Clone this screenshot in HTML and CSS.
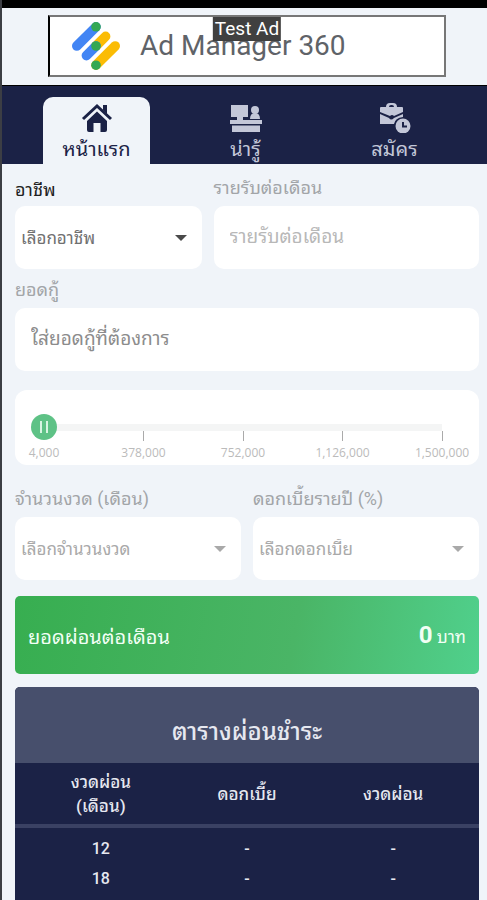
FILE: index.html
```html
<!DOCTYPE html>
<html lang="th">
<head>
<meta charset="utf-8">
<meta name="viewport" content="width=device-width, initial-scale=1">
<title>หน้าแรก</title>
<link rel="stylesheet" href="styles.css">
</head>
<body>
<div class="status-bar"></div>
<aside class="ad">
  <a class="ad-banner" href="#">
    <svg class="ad-logo" viewBox="0 0 50 50" aria-hidden="true">
      <g fill="none" stroke-width="10" stroke-linecap="round">
        <path stroke="#4285f4" d="M5 25 25 5"/>
        <path stroke="#fbbc04" d="M25 25 35 15"/>
        <path stroke="#4285f4" d="M15 35 25 25"/>
        <path stroke="#fbbc04" d="M25 45 45 25"/>
      </g>
      <g fill="#34a853"><circle cx="25" cy="5" r="5"/><circle cx="25" cy="25" r="5"/><circle cx="25" cy="45" r="5"/></g>
    </svg>
    <span class="ad-name">Ad Manager 360</span>
    <span class="ad-badge">Test Ad</span>
  </a>
</aside>
<nav class="tabs">
  <a class="tab tab-active" href="#">
    <svg class="tab-icon" viewBox="0 0 32 30" aria-hidden="true">
      <path fill="none" stroke="currentColor" stroke-width="3" d="M2 16 16 3 30 16"/>
      <path fill="currentColor" d="M22 2h4v9l-4-4zM16 8.500 26 18v9q0 2-2 2h-4.500v-9h-7v9H8q-2 0-2-2v-9z"/>
    </svg>
    <span>หน้าแรก</span>
  </a>
  <a class="tab" href="#">
    <svg class="tab-icon" viewBox="0 0 32 30" aria-hidden="true">
      <path fill="currentColor" d="M1 2h17v12h-5v3h19v4H0v-4h7v-3H1zM2 22.500h28V29H2z"/>
      <circle fill="currentColor" cx="25" cy="7" r="4"/>
      <path fill="currentColor" d="M20 16q0-6 5-6t5 6z"/>
    </svg>
    <span>น่ารู้</span>
  </a>
  <a class="tab" href="#">
    <svg class="tab-icon" viewBox="0 0 32 30" aria-hidden="true">
      <path fill="currentColor" fill-rule="evenodd" d="M7 4q0-4 4-4h3q4 0 4 4h5q1 0 1 1v4l-9 4q-2-2-4 0L1 9V5q0-1 1-1zM10 4h5q0-2-2-2h-1q-2 0-2 2z"/>
      <path fill="currentColor" d="M1 11l9 4q2 3 5 0l9-4v3q-8 1-9 7H1z"/>
      <circle fill="currentColor" cx="24" cy="23" r="7.500"/>
      <path fill="none" stroke="#1b2246" stroke-width="2" d="M24 19v4.500h4"/>
    </svg>
    <span>สมัคร</span>
  </a>
</nav>
<main class="page">
  <form class="form">
    <div class="row row-job">
      <div class="field">
        <label class="label label-job" for="job">อาชีพ</label>
        <div class="select select-dark">
          <select id="job"><option>เลือกอาชีพ</option></select>
          <svg class="caret" viewBox="0 0 12 6" aria-hidden="true"><path fill="currentColor" d="M0 0h12L6 6z"/></svg>
        </div>
      </div>
      <div class="field">
        <label class="label" for="income">รายรับต่อเดือน</label>
        <input class="input input-light" id="income" type="text" placeholder="รายรับต่อเดือน">
      </div>
    </div>
    <div class="field">
      <label class="label" for="loan">ยอดกู้</label>
      <input class="input" id="loan" type="text" placeholder="ใส่ยอดกู้ที่ต้องการ">
    </div>
    <div class="slider">
      <input class="range" type="range" min="4000" max="1500000" step="1000" value="4000" aria-label="ยอดกู้">
      <ul class="ticks">
        <li>4,000</li><li>378,000</li><li>752,000</li><li>1,126,000</li><li>1,500,000</li>
      </ul>
    </div>
    <div class="row">
      <div class="field">
        <label class="label" for="term">จำนวนงวด (เดือน)</label>
        <div class="select">
          <select id="term"><option>เลือกจำนวนงวด</option></select>
          <svg class="caret" viewBox="0 0 12 6" aria-hidden="true"><path fill="currentColor" d="M0 0h12L6 6z"/></svg>
        </div>
      </div>
      <div class="field">
        <label class="label" for="rate">ดอกเบี้ยรายปี (%)</label>
        <div class="select">
          <select id="rate"><option>เลือกดอกเบี้ย</option></select>
          <svg class="caret" viewBox="0 0 12 6" aria-hidden="true"><path fill="currentColor" d="M0 0h12L6 6z"/></svg>
        </div>
      </div>
    </div>
  </form>
  <section class="total">
    <span class="total-label">ยอดผ่อนต่อเดือน</span>
    <span class="total-value"><strong>0</strong> บาท</span>
  </section>
  <section class="schedule">
    <h2 class="schedule-title">ตารางผ่อนชำระ</h2>
    <table class="schedule-table">
      <colgroup><col class="col-wide"><col><col class="col-wide"></colgroup>
      <thead><tr><th>งวดผ่อน<br>(เดือน)</th><th>ดอกเบี้ย</th><th>งวดผ่อน</th></tr></thead>
      <tbody>
        <tr><td>12</td><td>-</td><td>-</td></tr>
        <tr><td>18</td><td>-</td><td>-</td></tr>
      </tbody>
    </table>
  </section>
</main>
</body>
</html>
```
FILE: styles.css
```css
* { box-sizing: border-box; }
body {
  margin: 0;
  min-height: 100vh;
  display: flex;
  flex-direction: column;
  background: #f0f4f9;
  border-left: 2px solid #3c3e44;
  font-family: Roboto, "Noto Sans Thai Looped", "Noto Looped Thai", "Droid Sans Thai", Loma, Garuda, "Noto Sans Thai", sans-serif;
  color: #a2a5a8;
}
.status-bar { height: 8px; background: #000; margin-left: -2px; }
.ad { padding: 7px 41px 8px 46px; border-bottom: 1px solid #000; }
.ad-banner {
  position: relative;
  display: flex;
  align-items: center;
  gap: 20px;
  height: 62px;
  padding-left: 22px;
  border: 2px solid #777;
  border-left-color: #000;
  background: #fff;
  text-decoration: none;
}
.ad-logo { width: 48px; height: 48px; overflow: visible; }
.ad-name { font: 28px/32px Roboto, sans-serif; color: #5f6368; }
.ad-badge {
  position: absolute;
  top: 0;
  left: 50%;
  transform: translateX(-50%);
  padding: 0 2px;
  font: 19px/24px Roboto, sans-serif;
  color: #fff;
  background: #404040;
  white-space: nowrap;
}
.tabs {
  display: flex;
  padding: 11px 18px 0 20px;
  background: #1b2246;
}
.tab {
  flex: 1;
  display: flex;
  flex-direction: column;
  align-items: center;
  gap: 2px;
  height: 67px;
  margin: 0 21px;
  padding-top: 6px;
  font-size: 20px;
  line-height: 28px;
  color: #c3c7d8;
  text-decoration: none;
  white-space: nowrap;
}
.tab-active {
  color: #1b2246;
  background: #f0f4f9;
  border-radius: 10px 10px 0 0;
}
.tab-icon { width: 32px; height: 30px; }
.page {
  flex: 1;
  display: flex;
  flex-direction: column;
  padding: 12px 8px 0 13px;
}
.form { display: flex; flex-direction: column; }
.row { display: grid; grid-template-columns: 1fr 1fr; gap: 12px; }
.row-job { grid-template-columns: 187fr 266fr; }
.field { display: flex; flex-direction: column; min-width: 0; }
.label { height: 30px; font-size: 18px; line-height: 24px; white-space: nowrap; }
.row + .field { padding-top: 9px; }
.label-job { color: #222; line-height: 28px; }
.input {
  width: 100%;
  height: 63px;
  padding: 0 16px 2px;
  border: 0;
  border-radius: 10px;
  background: #fff;
  font: inherit;
  font-size: 19px;
}
.input::placeholder { color: #8c8c8c; opacity: 1; }
.input-light::placeholder { color: #b8b8b8; }
.select { display: grid; align-items: center; color: #a9a9a9; }
.select select, .caret { grid-area: 1 / 1; }
.select select {
  appearance: none;
  width: 100%;
  height: 63px;
  padding: 0 40px 0 6px;
  border: 0;
  border-radius: 10px;
  background: #fff;
  font: inherit;
  font-size: 17px;
  color: inherit;
}
.caret { width: 12px; height: 6px; justify-self: end; margin-right: 15px; pointer-events: none; }
.select-dark { color: #707070; }
.select-dark .caret { color: #4a4a4a; }
.slider {
  height: 75px;
  margin: 19px 0 22px;
  padding: 24px 24px 0 16px;
  border-radius: 12px;
  background: #fff;
}
.range {
  display: block;
  appearance: none;
  width: 100%;
  height: 26px;
  margin: 0;
  background: linear-gradient(#f4f5f5, #f4f5f5) center / calc(100% - 26px) 7px no-repeat;
}
.range::-webkit-slider-thumb {
  appearance: none;
  width: 26px;
  height: 26px;
  border-radius: 50%;
  background:
    linear-gradient(#d8f5e2, #d8f5e2) 9px 7px / 2px 12px no-repeat,
    linear-gradient(#d8f5e2, #d8f5e2) 15px 7px / 2px 12px no-repeat,
    #5ec286;
}
.ticks {
  display: flex;
  justify-content: space-between;
  margin: -9px 13px 0;
  padding: 0;
  list-style: none;
  font: 12px/16px "Open Sans", sans-serif;
  color: #bbb;
}
.ticks li {
  display: flex;
  flex-direction: column;
  align-items: center;
  gap: 4px;
  width: 0;
}
.ticks li::before { content: ""; width: 1px; height: 10px; background: #aaa; }
.ticks li:first-child::before { visibility: hidden; }
.total {
  display: flex;
  align-items: center;
  justify-content: space-between;
  height: 78px;
  margin: 16px 0 13px;
  padding: 0 13px;
  border-radius: 5px;
  background: linear-gradient(100deg, #37ae50, #4ab566 60%, #50d08c);
  color: #f2fff5;
}
.total-label { font-size: 20px; }
.total-value { font-size: 17px; }
.total-value strong { font-size: 24px; }
.schedule {
  flex: 1;
  border-radius: 5px 5px 0 0;
  overflow: hidden;
  background: #1b2246;
  color: #e6e8f0;
}
.schedule-title {
  display: flex;
  align-items: center;
  justify-content: center;
  height: 76px;
  margin: 0;
  padding-top: 8px;
  background: #474f6c;
  font-size: 24px;
  font-weight: 500;
}
.schedule-table {
  width: 100%;
  padding: 0;
  border-collapse: collapse;
  table-layout: fixed;
  text-align: center;
  font-size: 16px;
  font-weight: 500;
}
.col-wide { width: 37%; }
th { height: 63px; padding: 0; border-bottom: 4px solid #3a4163; font-size: 17px; font-weight: 500; line-height: 24px; }
td { height: 31px; padding: 0; }
tbody tr:first-child td { height: 37px; padding-top: 6px; }
```
